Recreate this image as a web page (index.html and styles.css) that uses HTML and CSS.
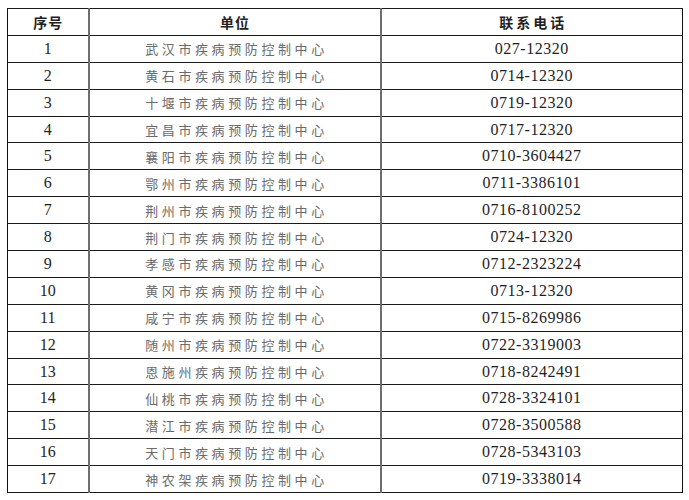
FILE: index.html
```html
<!DOCTYPE html>
<html lang="zh">
<head>
<meta charset="utf-8">
<link rel="stylesheet" href="styles.css">
</head>
<body>
<table class="cdc">
  <colgroup>
    <col class="c-no">
    <col class="c-unit">
    <col class="c-tel">
  </colgroup>
  <thead>
    <tr><th>序号</th><th>单位</th><th class="tel-h">联系电话</th></tr>
  </thead>
  <tbody>
    <tr><td class="no">1</td><td class="unit">武汉市疾病预防控制中心</td><td class="tel">027-12320</td></tr>
    <tr><td class="no">2</td><td class="unit">黄石市疾病预防控制中心</td><td class="tel">0714-12320</td></tr>
    <tr><td class="no">3</td><td class="unit">十堰市疾病预防控制中心</td><td class="tel">0719-12320</td></tr>
    <tr><td class="no">4</td><td class="unit">宜昌市疾病预防控制中心</td><td class="tel">0717-12320</td></tr>
    <tr><td class="no">5</td><td class="unit">襄阳市疾病预防控制中心</td><td class="tel">0710-3604427</td></tr>
    <tr><td class="no">6</td><td class="unit">鄂州市疾病预防控制中心</td><td class="tel">0711-3386101</td></tr>
    <tr><td class="no">7</td><td class="unit">荆州市疾病预防控制中心</td><td class="tel">0716-8100252</td></tr>
    <tr><td class="no">8</td><td class="unit">荆门市疾病预防控制中心</td><td class="tel">0724-12320</td></tr>
    <tr><td class="no">9</td><td class="unit">孝感市疾病预防控制中心</td><td class="tel">0712-2323224</td></tr>
    <tr><td class="no">10</td><td class="unit">黄冈市疾病预防控制中心</td><td class="tel">0713-12320</td></tr>
    <tr><td class="no">11</td><td class="unit">咸宁市疾病预防控制中心</td><td class="tel">0715-8269986</td></tr>
    <tr><td class="no">12</td><td class="unit">随州市疾病预防控制中心</td><td class="tel">0722-3319003</td></tr>
    <tr><td class="no">13</td><td class="unit">恩施州疾病预防控制中心</td><td class="tel">0718-8242491</td></tr>
    <tr><td class="no">14</td><td class="unit">仙桃市疾病预防控制中心</td><td class="tel">0728-3324101</td></tr>
    <tr><td class="no">15</td><td class="unit">潜江市疾病预防控制中心</td><td class="tel">0728-3500588</td></tr>
    <tr><td class="no">16</td><td class="unit">天门市疾病预防控制中心</td><td class="tel">0728-5343103</td></tr>
    <tr><td class="no">17</td><td class="unit">神农架疾病预防控制中心</td><td class="tel">0719-3338014</td></tr>
  </tbody>
</table>
</body>
</html>
```
FILE: styles.css
```css
html, body {
  margin: 0;
  padding: 0;
  background: #ffffff;
}
body {
  padding: 8px 0 0 7px;
}
.cdc {
  border-collapse: collapse;
  table-layout: fixed;
  width: 675px;
  border: 1.5px solid #111;
}
.c-no { width: 81px; }
.c-unit { width: 292px; }
.c-tel { width: 302px; }
.cdc th, .cdc td {
  height: 26.9px;
  padding: 0;
  text-align: center;
  vertical-align: middle;
  border-top: 1px solid #1a1a1a;
  border-bottom: 1px solid #1a1a1a;
  box-sizing: border-box;
}
.cdc th:first-child, .cdc td:first-child,
.cdc th:nth-child(2), .cdc td:nth-child(2) {
  border-right: 2px solid #6e6e6e;
}
.cdc th {
  font-family: "Noto Sans CJK SC", sans-serif;
  font-weight: 700;
  font-size: 14px;
  color: #222;
  letter-spacing: 1px;
  padding-left: 1px;
}
.cdc th.tel-h {
  letter-spacing: 3px;
  padding-left: 3px;
}
.no, .tel {
  font-family: "Liberation Serif", serif;
  font-size: 16px;
  color: #1e1e1e;
}
.tel {
  letter-spacing: 0.5px;
}
.unit {
  font-family: "Noto Sans CJK SC", sans-serif;
  font-size: 13px;
  color: #6a6a6a;
  letter-spacing: 3.6px;
  padding-left: 4px !important;
}
```
